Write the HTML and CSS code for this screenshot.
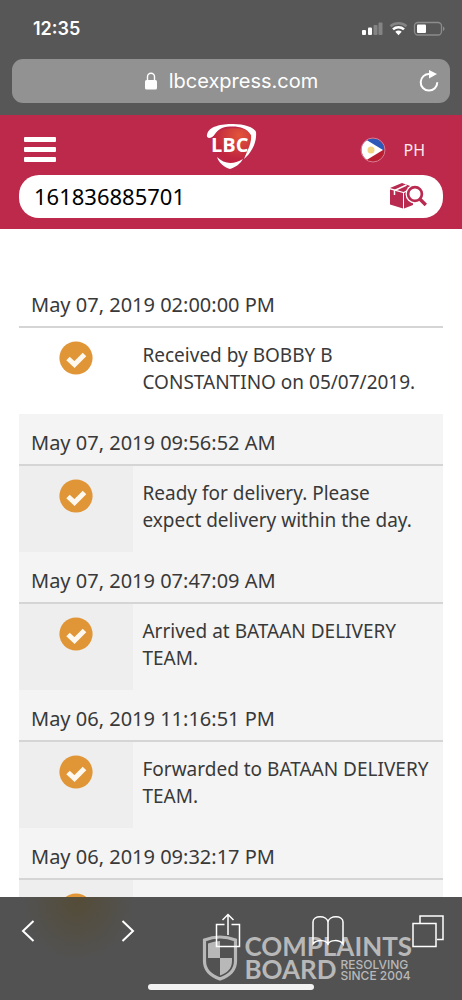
FILE: index.html
```html
<!DOCTYPE html>
<html lang="en">
<head>
<meta charset="utf-8">
<meta name="viewport" content="width=device-width, initial-scale=1">
<title>LBC Express tracking</title>
<link rel="stylesheet" href="styles.css">
</head>
<body>
<svg class="sprite" aria-hidden="true">
  <symbol id="check" viewBox="0 0 34 34">
    <circle cx="17" cy="17" r="16.6" fill="#e09536"/>
    <path d="M9 17.500l6.500 6L25.500 13.500" fill="none" stroke="#fff8ee" stroke-width="5" stroke-linejoin="miter"/>
  </symbol>
</svg>
<header class="browser">
  <div class="status">
    <time class="clock">12:35</time>
    <svg class="indicators" viewBox="0 0 84 18" aria-label="Signal, Wi-Fi and battery">
      <g fill="#fff"><rect x="1" y="10" width="4" height="5" rx="1"/><rect x="7" y="7.500" width="4" height="7.500" rx="1"/></g>
      <g fill="#848484"><rect x="12.500" y="5" width="4" height="10" rx="1"/><rect x="17.500" y="2.500" width="4" height="12.500" rx="1"/></g>
      <g fill="none" stroke-width="2.600">
        <path d="M29.500 6.200a12.500 12.500 0 0 1 16 0" stroke="#848484"/>
        <path d="M32 9.400a8.300 8.300 0 0 1 11 0" stroke="#fff"/>
      </g>
      <path d="M34.300 11.700a4.600 4.600 0 0 1 6.400 0l-3.200 3.500z" fill="#fff"/>
      <rect x="53.500" y="2.500" width="27" height="12.500" rx="3.500" fill="none" stroke="#8c8c8c" stroke-width="1.300"/>
      <rect x="56" y="4.500" width="9" height="8.600" rx="1" fill="#fff"/>
      <path d="M82 6.500c2 .8 2 3.700 0 4.500z" fill="#8c8c8c"/>
    </svg>
  </div>
  <div class="address">
    <div class="site">
      <svg class="lock" viewBox="0 0 14 18" aria-hidden="true"><rect x="1" y="8" width="12" height="9.500" rx="1.500" fill="#fff"/><path d="M3.500 8.500V4.800a3.500 3.500 0 0 1 7 0v3.700" fill="none" stroke="#fff" stroke-width="1.400"/></svg>
      <span>lbcexpress.com</span>
    </div>
    <button class="reload" aria-label="Reload"><svg viewBox="0 0 22 24" aria-hidden="true"><path d="M11.500 5A8.300 8.300 0 1 0 19.300 13.300" fill="none" stroke="#fff" stroke-width="2"/><path d="M11 1l8 4-8 4.500z" fill="#fff"/></svg></button>
  </div>
</header>

<main class="page">
  <div class="banner">
    <nav class="topnav">
      <button class="menu" aria-label="Menu"><span></span><span></span><span></span></button>
      <svg class="logo" viewBox="0 0 52 48" role="img" aria-label="LBC">
        <defs><radialGradient id="shine" cx=".68" cy=".2" r=".65"><stop offset="0" stop-color="#e2553a"/><stop offset="1" stop-color="#bf2440"/></radialGradient></defs>
        <path d="M7 13C14 3 42 3 47 11c1 14-8 26-20 31C16 39 7 27 7 13z" fill="url(#shine)"/>
        <path d="M2 12C3 3 17 1 28 1c11 0 21 3 23 8 1 10-4 20-12 27 3-8 8-16 7-24C42 5 34 3 25 3.500 16 4 13 7 10 11c-3 5-9 5-8 1z" fill="#fff"/>
        <path d="M12 34c7 7 16 8 26 2-3 5-7 8-13 10-6-2-11-6-13-12z" fill="#fff"/>
        <text x="6" y="29" class="logo-text">LBC</text>
      </svg>
      <button class="region">
        <svg class="flag" viewBox="0 0 26 26" aria-hidden="true">
          <defs><clipPath id="disc"><circle cx="13" cy="13" r="11.500"/></clipPath></defs>
          <g clip-path="url(#disc)"><path d="M0 0h26v13H0z" fill="#2e58b8"/><path d="M0 13h26v13H0z" fill="#b91f31"/><path d="M0-1l23 14L0 27z" fill="#fff"/><circle cx="11" cy="13" r="3.500" fill="#f3d483"/></g>
          <circle cx="13" cy="13" r="12" fill="none" stroke="#d77b91"/>
        </svg>
        <span>PH</span>
      </button>
    </nav>
    <form class="search">
      <input class="tracking" type="text" value="161836885701" aria-label="Tracking number">
      <button class="find" type="button" aria-label="Track package">
        <svg viewBox="0 0 38 28" aria-hidden="true">
          <g fill="#b92a50"><path d="M1 7.500L14 11v15.500L1 22.500z"/><path d="M15 11l9-4v16l-9 3.500z"/><path d="M1 6L13 1l11 4-9.500 5z"/></g>
          <path d="M5.500 13V8.500l12-5.500" fill="none" stroke="#fff" stroke-width="1.500"/>
          <circle cx="26" cy="12" r="9.500" fill="#fff"/>
          <circle cx="26" cy="12" r="6.900" fill="none" stroke="#b92a50" stroke-width="2.700"/>
          <path d="M30.800 17l6 6" stroke="#b92a50" stroke-width="3.400"/>
        </svg>
      </button>
    </form>
  </div>

  <ol class="history">
    <li class="event latest">
      <h2 class="date">May 07, 2019 02:00:00 PM</h2>
      <div class="detail"><div class="mark"><svg class="tick" aria-hidden="true"><use href="#check"/></svg></div><p class="note">Received by BOBBY B CONSTANTINO on 05/07/2019.</p></div>
    </li>
    <li class="event">
      <h2 class="date">May 07, 2019 09:56:52 AM</h2>
      <div class="detail"><div class="mark"><svg class="tick" aria-hidden="true"><use href="#check"/></svg></div><p class="note">Ready for delivery. Please expect delivery within the day.</p></div>
    </li>
    <li class="event">
      <h2 class="date">May 07, 2019 07:47:09 AM</h2>
      <div class="detail"><div class="mark"><svg class="tick" aria-hidden="true"><use href="#check"/></svg></div><p class="note">Arrived at BATAAN DELIVERY TEAM.</p></div>
    </li>
    <li class="event">
      <h2 class="date">May 06, 2019 11:16:51 PM</h2>
      <div class="detail"><div class="mark"><svg class="tick" aria-hidden="true"><use href="#check"/></svg></div><p class="note">Forwarded to BATAAN DELIVERY TEAM.</p></div>
    </li>
    <li class="event">
      <h2 class="date">May 06, 2019 09:32:17 PM</h2>
      <div class="detail"><div class="mark"><svg class="tick" aria-hidden="true"><use href="#check"/></svg></div><p class="note"></p></div>
    </li>
  </ol>
</main>

<footer class="toolbar">
  <div class="watermark">
    <svg class="shield" viewBox="0 0 36 46" aria-hidden="true">
      <path d="M2.500 5Q18-1 33.500 5v21c0 9-7 15-15.500 18C9.500 41 2.500 35 2.500 26z" fill="none" stroke="#b8b8b8" stroke-width="3.200"/>
      <path d="M18 6v17H6V8.500Q12 6 18 6zM18 23h12v3c0 8-5 12-12 14.500z" fill="#b8b8b8"/>
    </svg>
    <div class="brand">
      <span class="word">COMPLAINTS</span>
      <div class="second"><span class="word">BOARD</span><div class="tagline"><span>RESOLVING</span><span>SINCE 2004</span></div></div>
    </div>
  </div>
  <nav class="actions">
    <button aria-label="Back"><svg width="14" height="24" viewBox="0 0 14 24"><path d="M12.500 2L2 12l10.500 10"/></svg></button>
    <button aria-label="Forward"><svg width="14" height="24" viewBox="0 0 14 24"><path d="M1.500 2L12 12 1.500 22"/></svg></button>
    <button aria-label="Share"><svg width="26" height="36" viewBox="0 0 26 36"><path class="thin" d="M9.500 11.500h-8v22h23v-22h-8M13 22V2M7.500 7L13 1.500 18.500 7"/></svg></button>
    <button aria-label="Bookmarks"><svg width="32" height="32" viewBox="0 0 32 32"><path class="thin" d="M16 30V7C15 0 1 0 1 7v22c4-5 13-4 15 0 2-4 11-5 15 0V7c0-7-14-7-15 0"/></svg></button>
    <button aria-label="Tabs"><svg width="32" height="34" viewBox="0 0 32 34"><path class="thin" d="M1 9.500h23v23H1zM8 9V2h23v23.500h-6"/></svg></button>
  </nav>
  <div class="home"></div>
</footer>
</body>
</html>
```

FILE: styles.css
```css
* { box-sizing: border-box; }

body {
  margin: 0;
  height: 100vh;
  display: flex;
  flex-direction: column;
  background: #fff;
  color: #393939;
  font-family: "Trebuchet MS", "Noto Sans", sans-serif;
}

button {
  padding: 0;
  border: 0;
  background: none;
  color: inherit;
  font: inherit;
}

svg { display: block; }
.sprite { position: absolute; width: 0; height: 0; }

.browser {
  flex: none;
  padding: 0 12px 12px;
  background: #575757;
  color: #fff;
  font-family: Inter, sans-serif;
}
.status {
  display: flex;
  justify-content: space-between;
  padding: 18px 5px 19px 21px;
}
.clock { font-size: 18px; line-height: 22px; font-weight: 600; }
.indicators { width: 84px; height: 18px; margin-top: 2px; }
.address {
  display: flex;
  align-items: center;
  height: 44px;
  padding: 0 10px;
  border-radius: 11px;
  background: #929292;
}
.site {
  flex: 1;
  display: flex;
  justify-content: center;
  align-items: center;
  gap: 11px;
  padding-left: 22px;
  font-size: 20px;
  line-height: 24px;
}
.lock { width: 14px; height: 18px; }
.reload svg { width: 22px; height: 24px; }

.page { flex: 1; min-height: 0; overflow: hidden; }
.banner { padding: 8px 19px 11px; background: #bc294b; }
.topnav {
  display: grid;
  grid-template-columns: 1fr auto 1fr;
  align-items: center;
  height: 52px;
}
.menu {
  justify-self: start;
  display: grid;
  gap: 5px;
  width: 32px;
  margin: 0 5px 3px;
}
.menu span { height: 5px; border-radius: 1px; background: #fff; }
.logo { width: 52px; height: 48px; margin-bottom: 8px; }
.logo-text { font: 700 20px "Open Sans", sans-serif; fill: #fff; }
.region {
  justify-self: end;
  display: flex;
  align-items: center;
  gap: 17px;
  margin: 0 18px 3px 0;
  color: #fbe9ee;
  font-size: 16px;
  line-height: 24px;
}
.flag { width: 26px; height: 26px; }
.search {
  display: flex;
  align-items: center;
  height: 43px;
  padding: 0 16px 2px 15px;
  border-radius: 20px;
  background: #fff;
}
.tracking {
  flex: 1;
  min-width: 0;
  padding: 0;
  border: 0;
  outline: 0;
  background: none;
  color: #000;
  font: 22px/30px "Trebuchet MS", "Noto Sans", sans-serif;
}
.find svg { width: 38px; height: 28px; }

.history { margin: 47px 19px 0; padding: 0; list-style: none; }
.event { background: #f4f4f4; }
.latest { background: #fff; }
.date {
  margin: 0;
  padding: 15px 12px 8px;
  border-bottom: 2px solid #d5d5d5;
  font-size: 20px;
  line-height: 27px;
  font-weight: 400;
}
.detail { display: grid; grid-template-columns: 27% 1fr; min-height: 86px; }
.mark { padding-top: 13px; background: #eee; }
.latest .mark { background: none; }
.tick { width: 34px; height: 34px; margin: 0 auto; }
.note { margin: 0; padding: 14px 12px 18px 9px; font-size: 19px; line-height: 27px; }

.toolbar {
  flex: none;
  position: relative;
  overflow: hidden;
  height: 103px;
  display: flex;
  flex-direction: column;
  justify-content: space-between;
  align-items: center;
  padding: 14px 0 10px;
  background: radial-gradient(ellipse 55px 60px at 78px 4px, #544c38, transparent), #525252;
}
.actions {
  position: relative;
  align-self: stretch;
  display: grid;
  grid-template-columns: repeat(5, 1fr);
  place-items: center;
  height: 40px;
  margin: 0 -16px 0 -22px;
}
.actions path { fill: none; stroke: #fff; stroke-width: 2; }
.actions .thin { stroke-width: 1.5; }
.home { width: 166px; height: 6px; border-radius: 3px; background: #f2f2f2; }

.watermark {
  position: absolute;
  right: 50px;
  bottom: 19px;
  display: flex;
  align-items: center;
  gap: 6px;
  color: #b8b8b8;
}
.shield { width: 36px; height: 46px; }
.brand { font-family: Lato, sans-serif; }
.word { display: block; font-size: 26px; line-height: 23px; font-weight: 700; }
.second { display: flex; align-items: center; gap: 4px; }
.tagline { display: grid; font: 500 12px/11px Inter, sans-serif; }
```
